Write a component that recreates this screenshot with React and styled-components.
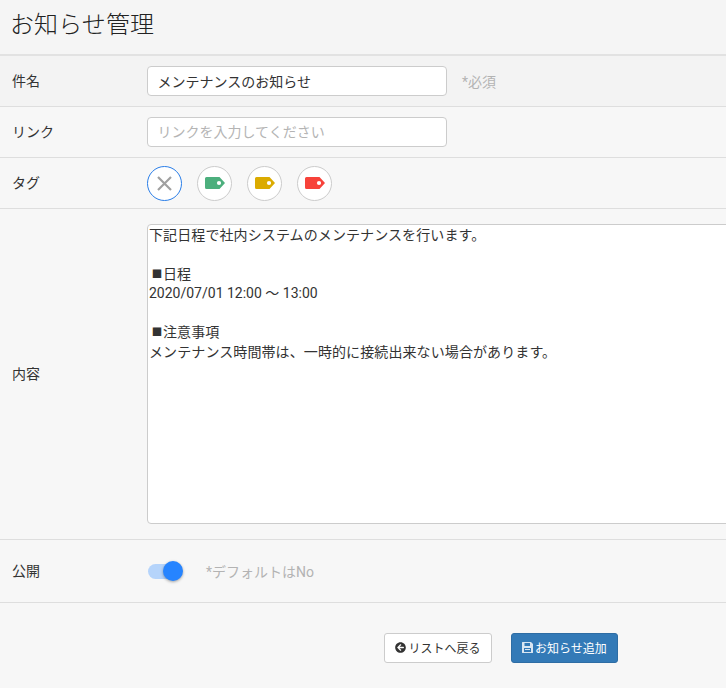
import React from "react";
import styled, { createGlobalStyle } from "styled-components";
import { FaArrowCircleLeft } from "react-icons/fa";

const Global = createGlobalStyle`
  html, body { margin: 0; padding: 0; background: #f7f7f7; overflow: hidden; }
  body { font-family: Roboto, "Noto Sans CJK JP", sans-serif; font-size: 14px; color: #333; }
  * { box-sizing: border-box; }
`;
const Page = styled.div`width: 726px; height: 688px; overflow: hidden;`;
const Header = styled.header`
  height: 56px; padding: 8px 10px 0; background: #f5f5f5; border-bottom: 2px solid #e2e2e2;
`;
const Title = styled.h1`
  margin: 0; font-size: 24px; font-weight: 300; line-height: 35px; letter-spacing: 0.1px; color: #222;
`;
const Row = styled.div`
  display: flex; align-items: center; padding-left: 12px;
  height: ${p => p.$h}px;
  background: ${p => p.$bg || "transparent"};
  border-bottom: 1px solid #dedede;
`;
const Label = styled.label`width: 135px; flex: none; color: #333; line-height: 20px;`;
const TextInput = styled.input`
  width: 300px; height: 30px; padding: 0 10px 0 9.5px; flex: none;
  font: inherit; color: #333; background: #fff;
  border: 1px solid #ccc; border-radius: 4px; outline: none;
  &::placeholder { color: #b4b4b4; opacity: 1; }
`;
const Hint = styled.span`color: #b3b3b3; margin-left: ${p => p.$ml}px;`;
const Tags = styled.div`display: flex; gap: 15px;`;
const TagButton = styled.button`
  width: 35px; height: 35px; padding: 0; border-radius: 50%; background: #fff;
  border: 1px solid ${p => (p.$active ? "#2a7ee8" : "#ccc")};
  display: flex; align-items: center; justify-content: center;
`;
const Memo = styled.div`
  width: 640px; height: 300px; flex: none; padding: 0.5px 1px 0;
  color: #333; background: #fff;
  border: 1px solid #ccc; border-radius: 4px; overflow: hidden;
`;
const MemoLine = styled.div`
  display: flex; height: 19.5px; line-height: 19.5px; white-space: pre;
  letter-spacing: ${p => (p.$latin ? 0 : 0.1)}px;
`;
const Mark = styled.span`
  flex: none; width: 14px; padding-left: 2px; font-size: 10.5px; letter-spacing: 0; text-align: center;
`;
const Switch = styled.div`position: relative; width: 35px; height: 16px; margin-left: 1px; flex: none;`;
const Track = styled.div`
  width: 30px; height: 15px; margin-top: 0.5px; border-radius: 8px; background: #b5d4fb;
`;
const Knob = styled.div`
  position: absolute; top: -2px; right: 0; width: 20px; height: 20px; border-radius: 50%;
  background: #2684ff; box-shadow: 0 1px 3px rgba(0,0,0,.35);
`;
const Actions = styled.div`display: flex; gap: 19px; padding: 30px 0 0 384px;`;
const Button = styled.button`
  height: 30px; display: flex; align-items: center; gap: 2px; padding: 0 0 2px; justify-content: center;
  width: ${p => p.$w}px; font: inherit; font-size: 12px; border-radius: 3px;
  color: ${p => (p.$primary ? "#fff" : "#333")};
  background: ${p => (p.$primary ? "#337ab7" : "#fff")};
  border: 1px solid ${p => (p.$primary ? "#2e6da4" : "#ccc")};
  svg { flex: none; }
`;

const Tag = ({ color }) => (
  <svg width="20" height="12" viewBox="0 0 20 12">
    <path d="M1.5 0H14.5L20 6L14.5 12H1.5A1.5 1.5 0 0 1 0 10.5V1.5A1.5 1.5 0 0 1 1.5 0Z" fill={color} />
    <circle cx="14" cy="6" r="2.1" fill="#fff" />
  </svg>
);

const Floppy = () => (
  <svg width="11" height="11" viewBox="0 0 11 11">
    <path
      fillRule="evenodd"
      fill="#d9e6f2"
      d="M0.5 0H9L11 2V10.5A0.5 0.5 0 0 1 10.5 11H0.5A0.5 0.5 0 0 1 0 10.5V0.5A0.5 0.5 0 0 1 0.5 0ZM2.5 1V4H8V1ZM2 6V10H9V6Z"
    />
    <rect x="3" y="7" width="5" height="1" fill="#d9e6f2" />
  </svg>
);

export default function App() {
  return (
    <Page>
      <Global />
      <Header><Title>お知らせ管理</Title></Header>
      <Row $h={51} $bg="#f3f3f3">
        <Label>件名</Label>
        <TextInput defaultValue="メンテナンスのお知らせ" />
        <Hint $ml={15}>*必須</Hint>
      </Row>
      <Row $h={51}>
        <Label>リンク</Label>
        <TextInput placeholder="リンクを入力してください" />
      </Row>
      <Row $h={51}>
        <Label>タグ</Label>
        <Tags>
          <TagButton $active aria-label="なし">
            <svg width="17" height="17" viewBox="0 0 17 17">
              <path d="M2 2L15 15M15 2L2 15" stroke="#a0a0a0" strokeWidth="2.2" fill="none" />
            </svg>
          </TagButton>
          <TagButton aria-label="緑"><Tag color="#4caf7d" /></TagButton>
          <TagButton aria-label="黄"><Tag color="#dbab00" /></TagButton>
          <TagButton aria-label="赤"><Tag color="#f7423a" /></TagButton>
        </Tags>
      </Row>
      <Row $h={331}>
        <Label>内容</Label>
        <Memo>
          <MemoLine>下記日程で社内システムのメンテナンスを行います。</MemoLine>
          <MemoLine />
          <MemoLine><Mark>■</Mark><span>日程</span></MemoLine>
          <MemoLine $latin>2020/07/01 12:00 ～ 13:00</MemoLine>
          <MemoLine />
          <MemoLine><Mark>■</Mark><span>注意事項</span></MemoLine>
          <MemoLine>メンテナンス時間帯は、一時的に接続出来ない場合があります。</MemoLine>
        </Memo>
      </Row>
      <Row $h={63}>
        <Label>公開</Label>
        <Switch><Track /><Knob /></Switch>
        <Hint $ml={23}>*デフォルトはNo</Hint>
      </Row>
      <Actions>
        <Button $w={108}><FaArrowCircleLeft size={11} />リストへ戻る</Button>
        <Button $w={107} $primary><Floppy />お知らせ追加</Button>
      </Actions>
    </Page>
  );
}
